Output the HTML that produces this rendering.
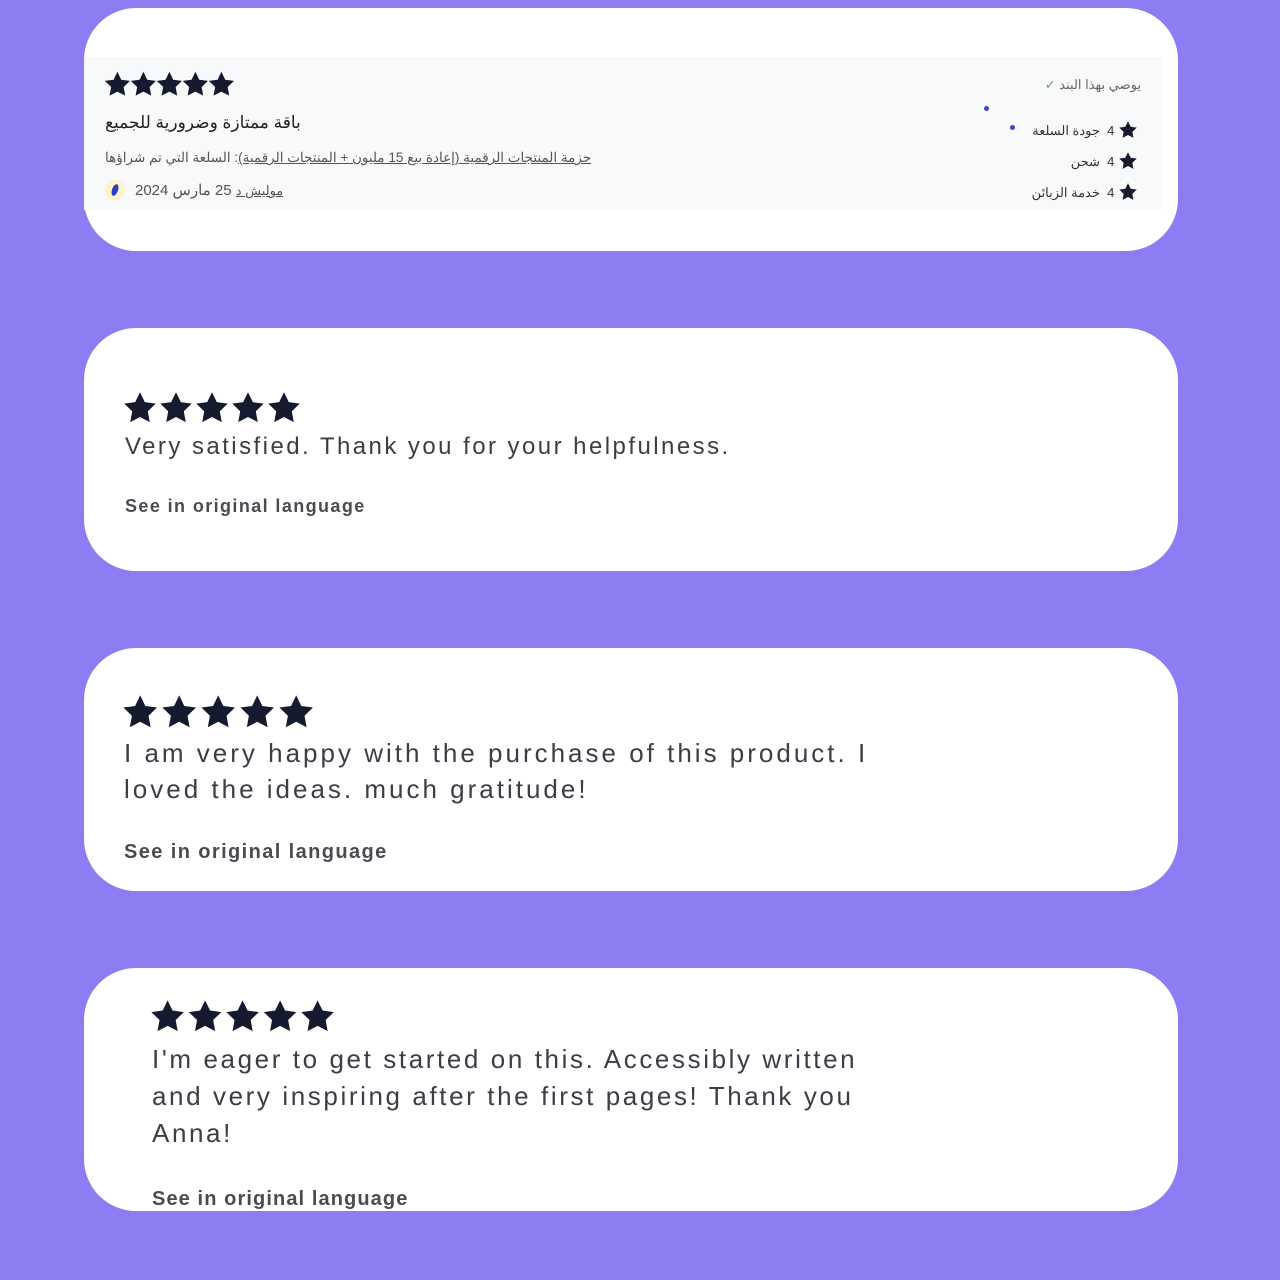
<!DOCTYPE html>
<html><head><meta charset="utf-8"><style>
body{margin:0;width:1280px;height:1280px;background:#8c7ef2;position:relative;overflow:hidden;font-family:"Liberation Sans",sans-serif;}
.card{position:absolute;left:84px;width:1094px;height:243px;background:#fff;border-radius:52px;}
.abs{position:absolute;white-space:nowrap;}
svg.st{position:absolute;overflow:visible;}
.txt{color:#3b3e47;}
.see{color:#4a4c52;font-weight:bold;}
</style></head><body>
<svg width="0" height="0" style="position:absolute"><defs><path id="s" d="M12 1.5l3.2 6.6 7.3 1-5.3 5.1 1.3 7.2L12 18l-6.5 3.4 1.3-7.2L1.5 9.1l7.3-1z" fill="#151a2e"/></defs></svg>

<div class="card" style="top:8px">
  <div class="abs" style="left:0;top:49px;width:1078px;height:153px;background:#f8f9fb"></div>
  <svg class="st" style="left:19px;top:62px" width="132" height="28" viewBox="0 0 132 28"><use href="#s" transform="translate(0,0) scale(1.2)"/><use href="#s" transform="translate(26,0) scale(1.2)"/><use href="#s" transform="translate(52,0) scale(1.2)"/><use href="#s" transform="translate(78,0) scale(1.2)"/><use href="#s" transform="translate(104,0) scale(1.2)"/></svg>
  <div class="abs" dir="rtl" style="left:21px;top:105px;font-size:17px;color:#222;font-family:'Liberation Sans','DejaVu Sans',sans-serif;">باقة ممتازة وضرورية للجميع</div>
  <div class="abs" style="left:21px;top:142px;font-size:13.5px;color:#555;"><span dir="rtl">السلعة التي تم شراؤها</span> :<span dir="rtl" style="text-decoration:underline">حزمة المنتجات الرقمية (إعادة بيع 15 مليون + المنتجات الرقمية)</span></div>
  <div class="abs" style="left:21px;top:172px;width:20px;height:20px;border-radius:50%;background:#fdf3c8"></div>
  <div class="abs" style="left:28px;top:176px;width:6px;height:12px;border-radius:50%;background:#2c3ec2;transform:rotate(20deg)"></div>
  <div class="abs" dir="rtl" style="left:51px;top:173px;font-size:15px;color:#555;"><span style="text-decoration:underline;font-size:13px">موليش د</span> 25 مارس 2024</div>

  <div class="abs" dir="rtl" style="right:37px;top:69px;font-size:13px;color:#666;">يوصي بهذا البند <span style="color:#3cb54a">✓</span></div>
  <div class="abs" style="left:900px;top:98px;width:5px;height:5px;border-radius:50%;background:#3d45d6"></div>
  <div class="abs" style="left:926px;top:117px;width:5px;height:5px;border-radius:50%;background:#3d45d6"></div>
  <div class="abs" dir="rtl" style="right:40px;top:112px;font-size:13px;color:#333;"><svg width="20" height="20" viewBox="0 0 24 24" style="vertical-align:-5px"><use href="#s"/></svg> 4 &nbsp;جودة السلعة</div>
  <div class="abs" dir="rtl" style="right:40px;top:143px;font-size:13px;color:#333;"><svg width="20" height="20" viewBox="0 0 24 24" style="vertical-align:-5px"><use href="#s"/></svg> 4 &nbsp;شحن</div>
  <div class="abs" dir="rtl" style="right:40px;top:174px;font-size:13px;color:#333;"><svg width="20" height="20" viewBox="0 0 24 24" style="vertical-align:-5px"><use href="#s"/></svg> 4 &nbsp;خدمة الزبائن</div>
</div>

<div class="card" style="top:328px">
  <svg class="st" style="left:38px;top:62px" width="180" height="34" viewBox="0 0 180 34"><use href="#s" transform="translate(0,0) scale(1.5)"/><use href="#s" transform="translate(36,0) scale(1.5)"/><use href="#s" transform="translate(72,0) scale(1.5)"/><use href="#s" transform="translate(108,0) scale(1.5)"/><use href="#s" transform="translate(144,0) scale(1.5)"/></svg>
  <div class="abs txt" style="left:41px;top:105px;font-size:24px;letter-spacing:2.45px;">Very satisfied. Thank you for your helpfulness.</div>
  <div class="abs see" style="left:41px;top:168px;font-size:18px;letter-spacing:1.4px;">See in original language</div>
</div>

<div class="card" style="top:648px">
  <svg class="st" style="left:37px;top:45px" width="195" height="38" viewBox="0 0 195 38"><use href="#s" transform="translate(0,0) scale(1.6)"/><use href="#s" transform="translate(39,0) scale(1.6)"/><use href="#s" transform="translate(78,0) scale(1.6)"/><use href="#s" transform="translate(117,0) scale(1.6)"/><use href="#s" transform="translate(156,0) scale(1.6)"/></svg>
  <div class="abs txt" style="left:40px;top:87px;font-size:26px;line-height:36px;letter-spacing:3px;">I am very happy with the purchase of this product. I<br>loved the ideas. much gratitude!</div>
  <div class="abs see" style="left:40px;top:193px;font-size:20px;letter-spacing:1.4px;">See in original language</div>
</div>

<div class="card" style="top:968px">
  <svg class="st" style="left:65px;top:30px" width="190" height="38" viewBox="0 0 190 38"><use href="#s" transform="translate(0,0) scale(1.55)"/><use href="#s" transform="translate(37.5,0) scale(1.55)"/><use href="#s" transform="translate(75,0) scale(1.55)"/><use href="#s" transform="translate(112.5,0) scale(1.55)"/><use href="#s" transform="translate(150,0) scale(1.55)"/></svg>
  <div class="abs txt" style="left:68px;top:73px;font-size:26px;line-height:37px;letter-spacing:2.6px;">I'm eager to get started on this. Accessibly written<br>and very inspiring after the first pages! Thank you<br>Anna!</div>
  <div class="abs see" style="left:68px;top:220px;font-size:20px;letter-spacing:1.1px;">See in original language</div>
</div>
</body></html>
